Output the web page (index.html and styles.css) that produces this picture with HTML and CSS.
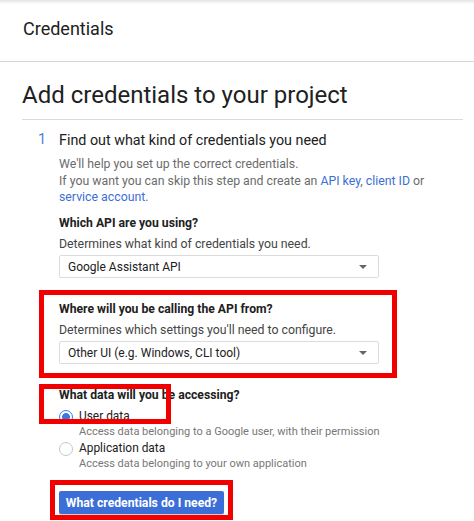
FILE: index.html
```html
<!DOCTYPE html>
<html>
<head>
<meta charset="utf-8">
<link rel="stylesheet" href="styles.css">
</head>
<body>
<header class="topbar">Credentials</header>
<main class="main">
  <h1 class="title">Add credentials to your project</h1>
  <section class="step">
    <div class="step-num">1</div>
    <div class="step-body">
      <div class="step-title">Find out what kind of credentials you need</div>
      <p class="intro">We'll help you set up the correct credentials.<br>If you want you can skip this step and create an <a class="link">API key</a>, <a class="link">client ID</a> or<br><a class="link">service account</a>.</p>

      <div class="field field-first">
        <div class="label">Which API are you using?</div>
        <div class="hint">Determines what kind of credentials you need.</div>
        <div class="select"><span>Google Assistant API</span><span class="caret"></span></div>
      </div>

      <div class="field">
        <div class="label">Where will you be calling the API from?</div>
        <div class="hint">Determines which settings you'll need to configure.</div>
        <div class="select"><span>Other UI (e.g. Windows, CLI tool)</span><span class="caret"></span></div>
        <div class="mark mark-where"></div>
      </div>

      <div class="field">
        <div class="label">What data will you be accessing?</div>
        <div class="option"><span class="radio checked"></span><span>User data</span></div>
        <div class="option-hint">Access data belonging to a Google user, with their permission</div>
        <div class="option"><span class="radio"></span><span>Application data</span></div>
        <div class="option-hint">Access data belonging to your own application</div>
        <div class="mark mark-data"></div>
      </div>

      <div class="actions">
        <button class="btn">What credentials do I need?</button>
        <div class="mark mark-btn"></div>
      </div>
    </div>
  </section>
</main>
</body>
</html>
```

FILE: styles.css
```css
html, body {
  margin: 0;
  padding: 0;
  background: #fff;
}
body {
  font-family: Roboto, "Liberation Sans", Arial, sans-serif;
  color: #212121;
  width: 474px;
  height: 521px;
  overflow: hidden;
}
.topbar {
  box-sizing: border-box;
  height: 62px;
  padding: 18px 0 0 23px;
  font-size: 18px;
  line-height: 22px;
  color: #212121;
  border-bottom: 1px solid #d6d6d6;
  background: linear-gradient(#e2e2e2, #ffffff 4px);
}
.main {
  padding: 0 11px 0 22px;
}
.title {
  margin: 19px 0 0 0;
  padding: 0 0 10px 0;
  font-size: 24px;
  line-height: 28px;
  font-weight: 400;
  color: #212121;
  border-bottom: 1px solid #dadada;
}
.step {
  display: flex;
  padding: 10px 0 0 16px;
}
.step-num {
  width: 21px;
  font-size: 14.5px;
  line-height: 20px;
  color: #4a7fd6;
}
.step-body {
  width: 320px;
}
.step-title {
  font-size: 14.3px;
  line-height: 20px;
  color: #212121;
  white-space: nowrap;
}
.intro {
  margin: 6px 0 0 0;
  font-size: 12.3px;
  line-height: 16.5px;
  color: #6b6b6b;
  white-space: nowrap;
}
.link {
  color: #3b6fd4;
  text-decoration: none;
}
.field {
  position: relative;
  margin-top: 22.5px;
}
.field-first {
  margin-top: 9px;
}
.label {
  font-size: 12.2px;
  line-height: 16px;
  font-weight: 700;
  color: #212121;
  margin-bottom: 5px;
  white-space: nowrap;
}
.hint {
  font-size: 12.3px;
  line-height: 16px;
  color: #444;
  margin-bottom: 3.5px;
  white-space: nowrap;
}
.select {
  box-sizing: border-box;
  height: 23px;
  width: 320px;
  display: flex;
  align-items: center;
  padding: 0 11px 0 8px;
  border: 1px solid #dcdcdc;
  border-radius: 2px;
  font-size: 12px;
  color: #212121;
}
.caret {
  margin-left: auto;
  width: 0;
  height: 0;
  border-left: 4px solid transparent;
  border-right: 4px solid transparent;
  border-top: 4px solid #666;
}
.option {
  display: flex;
  align-items: center;
  margin-top: 1px;
  font-size: 11.9px;
  line-height: 17px;
  color: #212121;
}
.radio {
  box-sizing: border-box;
  width: 14px;
  height: 14px;
  margin: 2px 6px 0 0;
  border: 1px solid #c8c8c8;
  border-radius: 50%;
  flex: none;
}
.radio.checked {
  border: 1.5px solid #3b78e7;
  background: radial-gradient(circle, #3b78e7 0 3.6px, #fff 4.2px);
}
.option-hint {
  margin: -1px 0 0 20px;
  font-size: 11px;
  line-height: 15px;
  color: #777;
  white-space: nowrap;
}
.actions {
  position: relative;
  margin-top: 20.5px;
}
.btn {
  box-sizing: border-box;
  height: 23px;
  width: 165px;
  padding: 0;
  border: none;
  border-radius: 2px;
  background: #3b6ed6;
  color: #fff;
  font-family: Roboto, "Liberation Sans", Arial, sans-serif;
  font-size: 12.2px;
  font-weight: 700;
  box-shadow: 0 1px 1px rgba(0,0,0,0.2);
}
.mark {
  position: absolute;
  box-sizing: border-box;
  border: 5px solid #f20000;
  pointer-events: none;
}
.mark-where {
  left: -20px;
  top: -10.5px;
  width: 358px;
  height: 88px;
}
.mark-data {
  left: -20px;
  top: -2.5px;
  width: 132px;
  height: 40px;
}
.mark-btn {
  left: -9px;
  top: -11px;
  width: 183px;
  height: 40px;
}
```
